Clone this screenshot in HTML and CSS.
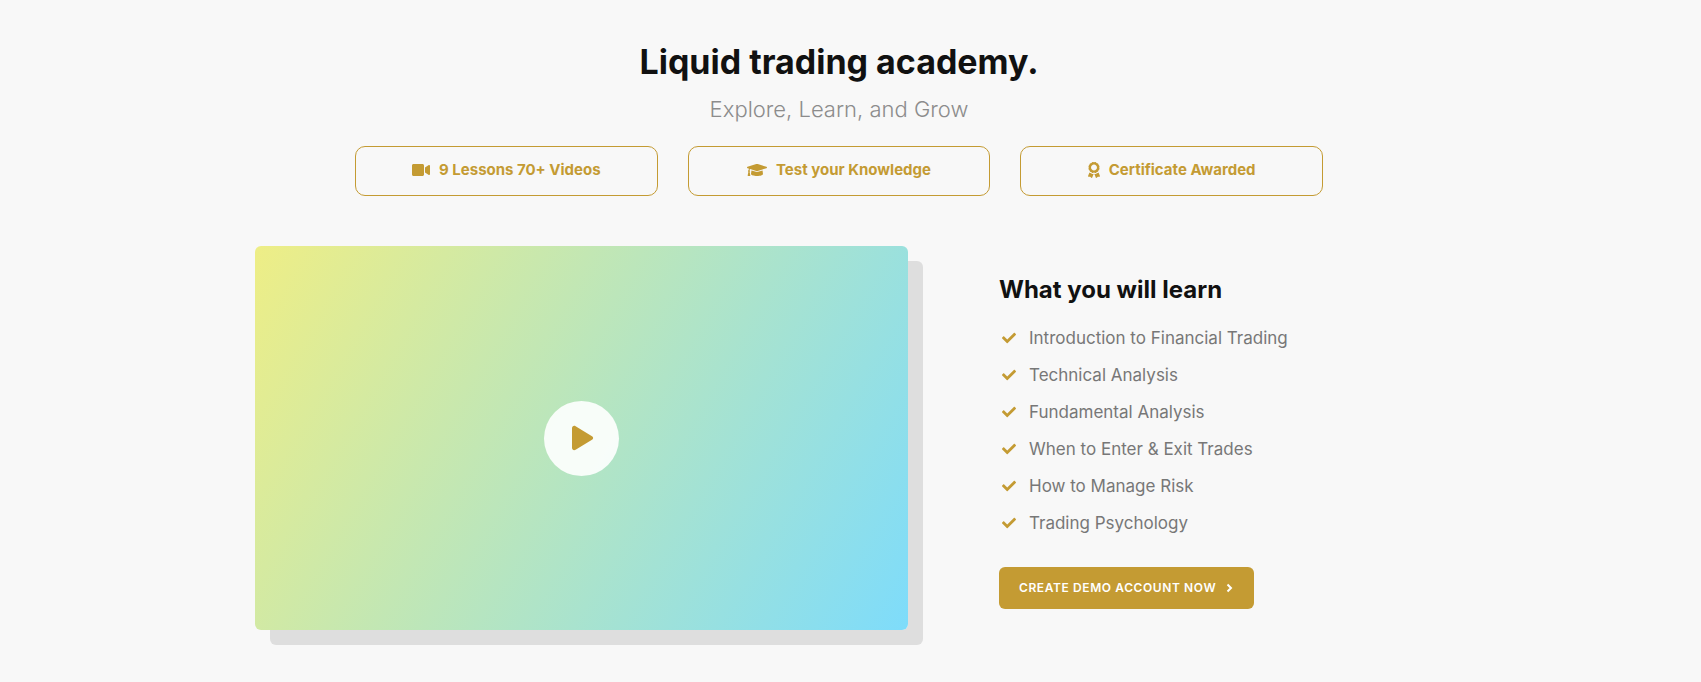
FILE: index.html
```
<!DOCTYPE html>
<html lang="en">
<head>
  <meta charset="UTF-8" />
  <meta name="viewport" content="width=device-width, initial-scale=1.0"/>
  <title>Liquid trading academy</title>
  <link rel="stylesheet" href="styles.css">
</head>
<body>

  <section class="academy">
    <header class="academy-header">
      <h1>Liquid trading academy.</h1>
      <p class="lead">Explore, Learn, and Grow</p>
    </header>

    <ul class="features">
      <li class="feature">
        <svg class="icon" width="18" height="16" viewBox="0 0 576 512" aria-hidden="true"><path d="M336.200 64H47.800C21.400 64 0 85.400 0 111.800v288.400C0 426.600 21.400 448 47.800 448h288.400c26.400 0 47.800-21.400 47.800-47.800V111.800c0-26.400-21.400-47.800-47.800-47.800zm189.400 37.700L416 177.300v157.400l109.600 75.500c21.200 14.600 50.400-.3 50.400-25.800V127.500c0-25.400-29.100-40.400-50.400-25.800z"/></svg>
        <span>9 Lessons 70+ Videos</span>
      </li>
      <li class="feature">
        <svg class="icon" width="20" height="16" viewBox="0 0 640 512" aria-hidden="true"><path d="M622.340 153.200L343.400 67.500c-15.200-4.670-31.600-4.670-46.790 0L17.660 153.200c-23.540 7.230-23.540 38.360 0 45.590l48.630 14.940c-10.670 13.190-17.230 29.280-17.880 46.900C38.780 266.150 32 276.110 32 288c0 10.780 5.680 19.850 13.860 25.650L20.330 428.530C18.110 438.520 25.710 448 35.940 448h56.110c10.240 0 17.840-9.480 15.620-19.470L82.140 313.650C90.320 307.850 96 298.780 96 288c0-11.570-6.470-21.250-15.660-26.870.76-15.020 8.440-28.300 20.690-36.720L296.600 284.500c9.060 2.780 26.440 6.250 46.790 0l278.950-85.700c23.550-7.240 23.550-38.360 0-45.600zM352.790 315.090c-28.530 8.760-52.840 3.920-65.590 0l-145.020-44.550L128 384c0 35.350 85.960 64 192 64s192-28.650 192-64l-14.180-113.470-145.030 44.560z"/></svg>
        <span>Test your Knowledge</span>
      </li>
      <li class="feature">
        <svg class="icon" width="12" height="16" viewBox="0 0 384 512" aria-hidden="true"><path d="M97.120 362.630c-8.690-8.690-4.160-6.240-25.120-11.850-9.510-2.550-17.870-7.450-25.430-13.320L1.200 448.700c-4.390 10.770 3.810 22.470 15.430 22.030l52.690-2.010L105.560 507c8 8.440 22.040 5.810 26.430-4.960l52.050-127.620c-10.840 6.040-22.870 9.580-35.310 9.580-19.500 0-37.820-7.590-51.610-21.370zM382.800 448.700l-45.370-111.240c-7.560 5.880-15.920 10.770-25.430 13.320-21.070 5.640-16.450 3.180-25.120 11.850-13.790 13.780-32.120 21.370-51.620 21.370-12.440 0-24.470-3.550-35.310-9.580L252 502.040c4.390 10.770 18.440 13.400 26.430 4.960l36.250-38.280 52.690 2.010c11.620.44 19.820-11.270 15.430-22.030zM263 340c15.280-15.550 17.030-14.210 38.790-20.140 13.890-3.790 24.750-14.840 28.470-28.980 7.480-28.400 5.540-24.970 25.950-45.750 10.170-10.350 14.140-25.440 10.420-39.580-7.470-28.380-7.480-24.420 0-52.830 3.720-14.140-.25-29.230-10.420-39.580-20.410-20.780-18.470-17.360-25.950-45.750-3.720-14.140-14.580-25.190-28.470-28.980-27.880-7.610-24.520-5.620-44.950-26.410-10.170-10.350-25-14.400-38.890-10.610-27.870 7.600-23.980 7.610-51.900 0-13.890-3.790-28.720.25-38.890 10.610-20.410 20.780-17.050 18.800-44.940 26.410-13.890 3.790-24.750 14.840-28.470 28.980-7.470 28.390-5.540 24.970-25.950 45.750-10.170 10.350-14.150 25.440-10.420 39.580 7.470 28.360 7.480 24.400 0 52.820-3.720 14.140.25 29.230 10.420 39.590 20.410 20.780 18.470 17.350 25.950 45.750 3.720 14.140 14.580 25.190 28.470 28.980C104.600 325.960 106.270 325 121 340c13.230 13.470 33.840 15.880 49.740 5.820a39.676 39.676 0 0 1 42.530 0c15.890 10.060 36.500 7.650 49.730-5.820zM97.660 175.960c0-53.030 42.240-96.020 94.340-96.020s94.340 42.990 94.340 96.020-42.240 96.020-94.340 96.020-94.340-42.990-94.340-96.020z"/></svg>
        <span>Certificate Awarded</span>
      </li>
    </ul>

    <div class="intro">
      <div class="video">
        <button type="button" class="play" aria-label="Play video">
          <svg width="24" height="26" viewBox="0 0 24 26" aria-hidden="true"><path d="M1 3.200C1 1.200 2.900.2 4.600 1.200L21 11.200c1.500.9 1.500 2.700 0 3.600L4.600 24.800C2.900 25.800 1 24.800 1 22.800z"/></svg>
        </button>
      </div>

      <div class="learn">
        <h2>What you will learn</h2>
        <ul class="topics">
          <li>Introduction to Financial Trading</li>
          <li>Technical Analysis</li>
          <li>Fundamental Analysis</li>
          <li>When to Enter &amp; Exit Trades</li>
          <li>How to Manage Risk</li>
          <li>Trading Psychology</li>
        </ul>
        <a class="cta" href="#">
          Create demo account now
          <svg width="8" height="10" viewBox="0 0 8 10" aria-hidden="true"><path d="M1.500 1.500L5 5 1.500 8.500"/></svg>
        </a>
      </div>
    </div>
  </section>

  <!-- check mark shared by the topic list -->
  <svg class="sprite" width="0" height="0" aria-hidden="true">
    <symbol id="check" viewBox="0 0 512 512"><path d="M173.900 439.400l-166.400-166.400c-10-10-10-26.200 0-36.200l36.200-36.200c10-10 26.200-10 36.200 0L192 312.700 432.100 72.600c10-10 26.200-10 36.200 0l36.200 36.200c10 10 10 26.200 0 36.200l-294.400 294.400c-10 10-26.200 10-36.200 0z"/></symbol>
  </svg>

  <script>
    document.querySelectorAll(".topics li").forEach((item) => {
      item.insertAdjacentHTML("afterbegin", '<svg class="check" width="14" height="14" aria-hidden="true"><use href="#check"/></svg>');
    });
  </script>
</body>
</html>
```
FILE: styles.css
```
:root {
  --bg: #f8f8f8;
  --heading: #111111;
  --text: #777777;
  --muted: #8c8c8c;
  --gold: #c49b33;
  --shadow: #dedede;
  --radius: 6px;
}

* {
  box-sizing: border-box;
  margin: 0;
  padding: 0;
}

body {
  font-family: Inter, sans-serif;
  background-color: var(--bg);
  color: var(--text);
  padding: 40px 23px 36px 0;
}

ul {
  list-style: none;
}

.academy {
  max-width: 1168px;
  margin: 0 auto;
}

.academy-header {
  text-align: center;
}

h1 {
  font-size: 34px;
  font-weight: 700;
  line-height: 44px;
  color: var(--heading);
}

.lead {
  margin-top: 8px;
  font-size: 22px;
  font-weight: 300;
  line-height: 34px;
  color: var(--muted);
}

.features {
  display: grid;
  grid-template-columns: repeat(3, 1fr);
  gap: 30px;
  margin-top: 20px;
  padding: 0 100px;
}

.feature {
  display: flex;
  align-items: center;
  justify-content: center;
  gap: 9px;
  height: 50px;
  padding-bottom: 3px;
  border: 1px solid var(--gold);
  border-radius: 10px;
  font-size: 15px;
  font-weight: 700;
  color: var(--gold);
}

.icon {
  fill: currentColor;
}

.intro {
  display: grid;
  grid-template-columns: 653fr 424fr;
  gap: 91px;
  align-items: center;
  margin-top: 50px;
}

.video {
  display: flex;
  align-items: center;
  justify-content: center;
  height: 384px;
  border-radius: var(--radius);
  background: linear-gradient(120deg, #eeee86, #7edcfb);
  box-shadow: 15px 15px 0 var(--shadow);
}

.play {
  display: flex;
  align-items: center;
  justify-content: center;
  width: 75px;
  height: 75px;
  padding-left: 2px;
  border: none;
  border-radius: 50%;
  background-color: rgba(255, 255, 255, 0.9);
  cursor: pointer;
}

.play svg {
  fill: var(--gold);
}

.learn {
  padding-top: 7px;
}

h2 {
  font-size: 24px;
  font-weight: 700;
  line-height: 32px;
  color: var(--heading);
}

.topics {
  margin-top: 13px;
}

.topics li {
  display: flex;
  align-items: center;
  gap: 13px;
  height: 37px;
  padding-left: 3px;
  font-size: 17px;
  font-weight: 400;
}

.check {
  fill: var(--gold);
}

.sprite {
  position: absolute;
}

.cta {
  display: inline-flex;
  align-items: center;
  gap: 10px;
  margin-top: 26px;
  padding: 0 20px;
  border-radius: var(--radius);
  background-color: var(--gold);
  font-size: 12px;
  font-weight: 600;
  line-height: 42px;
  letter-spacing: 0.05em;
  text-transform: uppercase;
  text-decoration: none;
  color: #ffffff;
}

.cta svg {
  fill: none;
  stroke: currentColor;
  stroke-width: 2;
}

@media (max-width: 900px) {
  body {
    padding: 30px 20px;
  }

  .features {
    grid-template-columns: 1fr;
    padding: 0;
  }

  .intro {
    grid-template-columns: 1fr;
  }
}
```
